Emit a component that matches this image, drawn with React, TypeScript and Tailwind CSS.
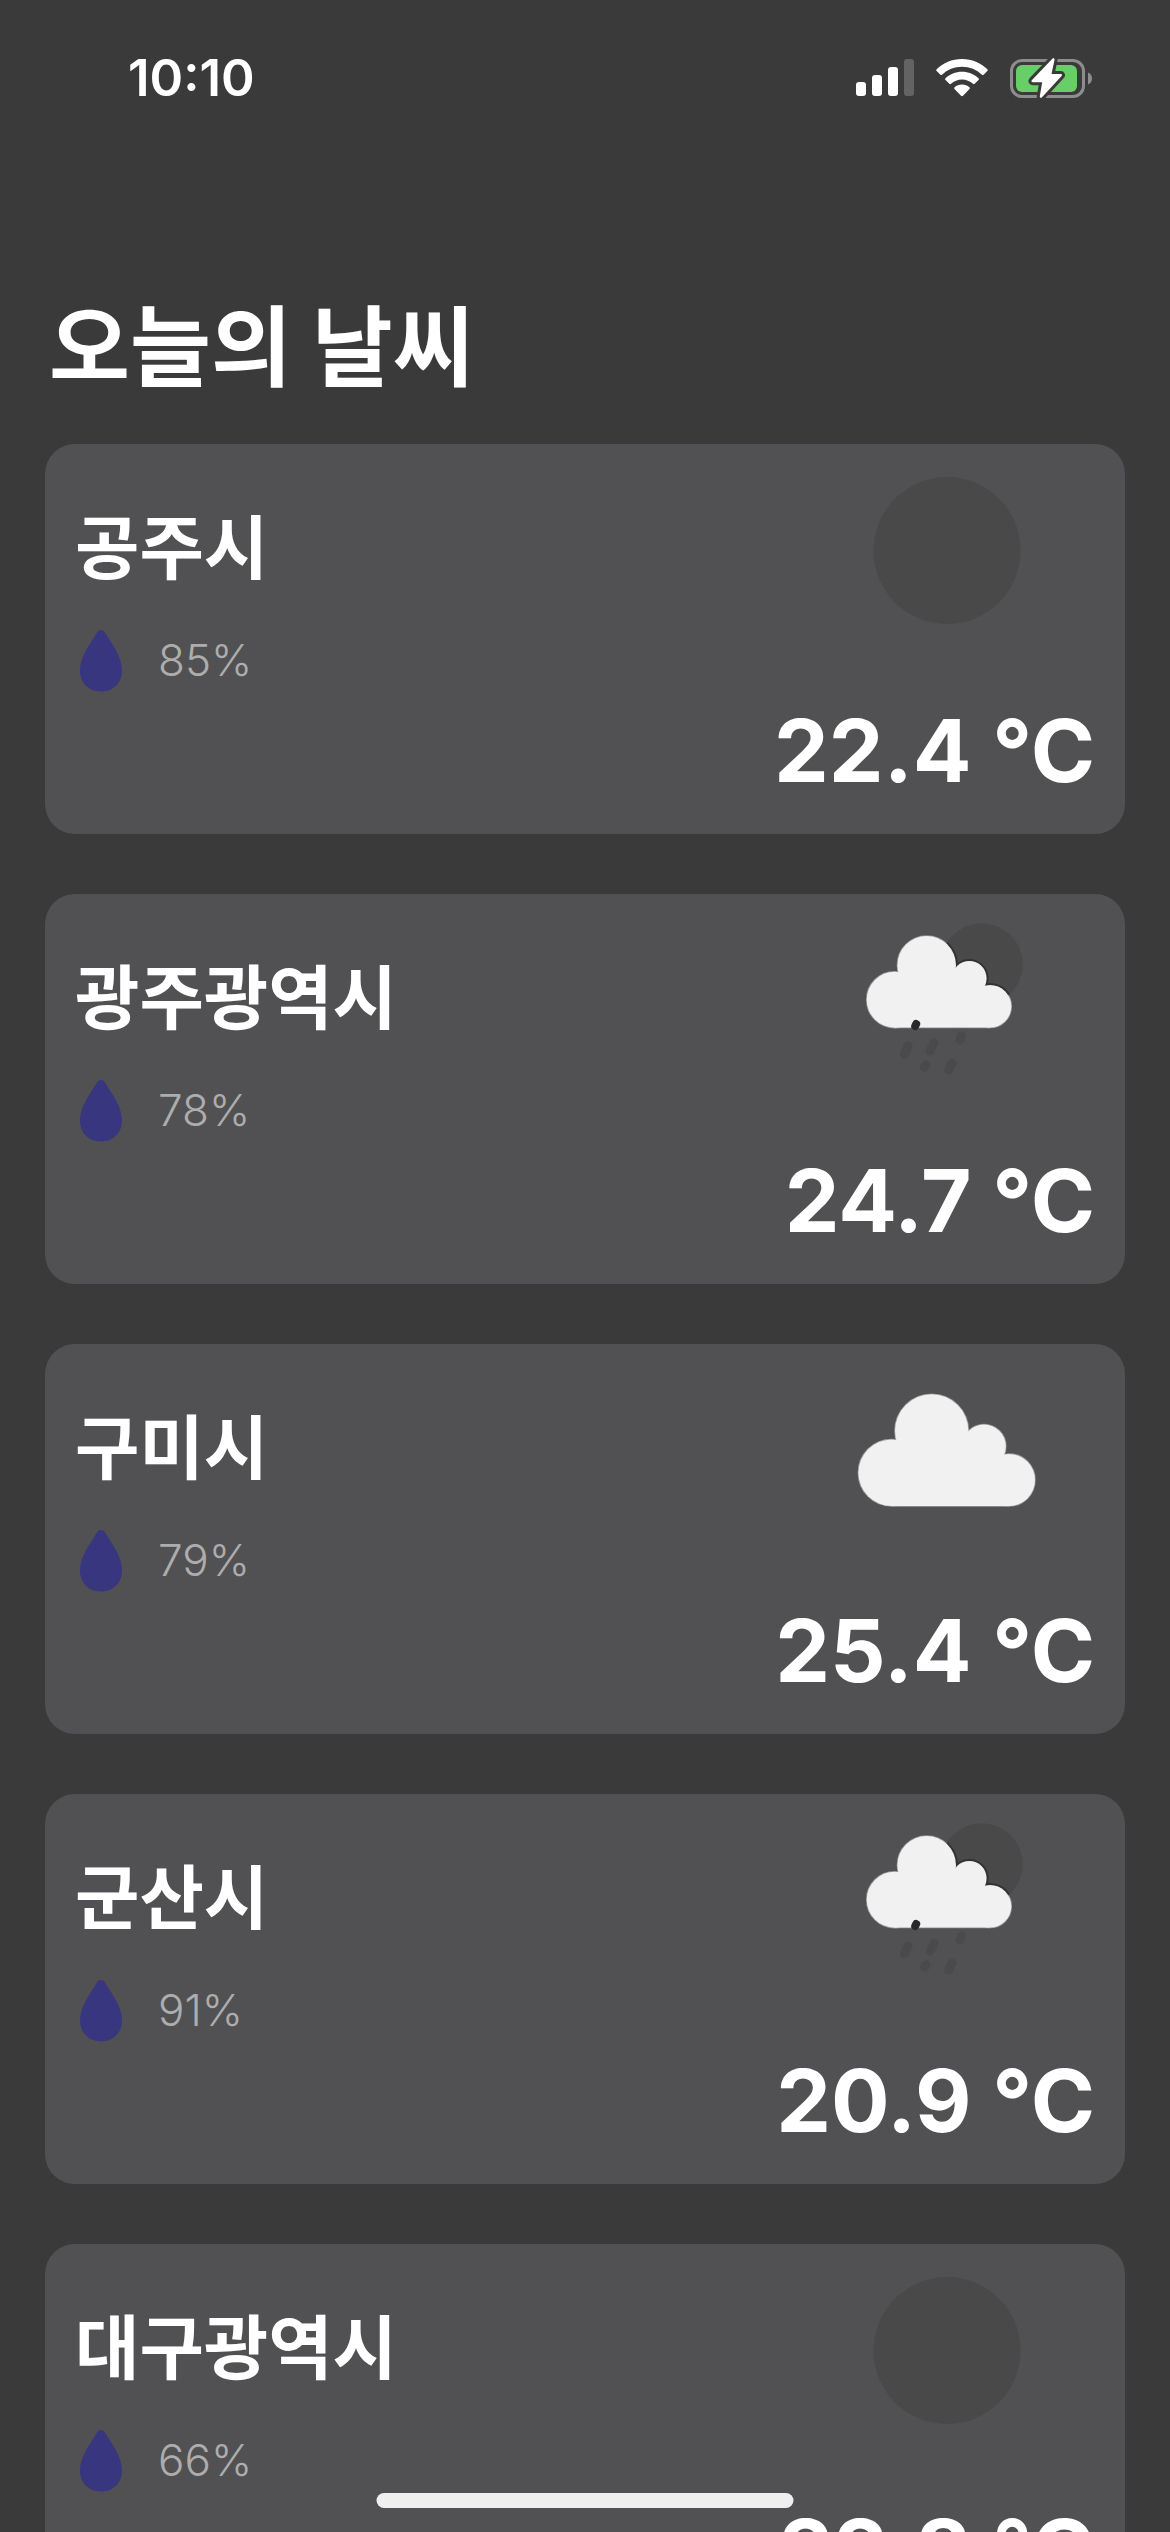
type Sky = "clear" | "clouds" | "rain";

type City = {
  name: string;
  humidity: number;
  temperature: string;
  sky: Sky;
};

const cities: City[] = [
  { name: "공주시", humidity: 85, temperature: "22.4", sky: "clear" },
  { name: "광주광역시", humidity: 78, temperature: "24.7", sky: "rain" },
  { name: "구미시", humidity: 79, temperature: "25.4", sky: "clouds" },
  { name: "군산시", humidity: 91, temperature: "20.9", sky: "rain" },
  { name: "대구광역시", humidity: 66, temperature: "22.8", sky: "clear" },
];

function SignalIcon() {
  return (
    <svg width="58" height="38" viewBox="0 0 58 38" aria-hidden="true">
      <rect x="0" y="23" width="10" height="14" rx="3" fill="#fff" />
      <rect x="16" y="16" width="10" height="21" rx="3" fill="#fff" />
      <rect x="32" y="8" width="10" height="29" rx="3" fill="#fff" />
      <rect x="48" y="0" width="10" height="37" rx="3" fill="#636363" />
    </svg>
  );
}

function WifiIcon() {
  return (
    <svg width="52" height="38" viewBox="0 0 52 38" fill="#fff" aria-hidden="true">
      <path d="M26 0C16 0 7.200 3.900 .7 10.300a1.200 1.200 0 0 0 0 1.700l3.700 3.700c.5.500 1.200.5 1.700 0C11.300 10.800 18.300 7.800 26 7.800s14.700 3 19.900 7.900c.5.500 1.200.5 1.700 0l3.700-3.700a1.200 1.200 0 0 0 0-1.700C44.800 3.900 36 0 26 0Z" />
      <path d="M26 12.800c-6.400 0-12.200 2.500-16.500 6.500a1.200 1.200 0 0 0 0 1.800l3.800 3.700c.5.500 1.200.5 1.700 0 2.900-2.700 6.800-4.300 11-4.300s8.100 1.600 11 4.300c.5.500 1.200.5 1.700 0l3.800-3.700c.5-.5.500-1.300 0-1.800-4.300-4-10.100-6.500-16.500-6.500Z" />
      <path d="M26 25.600c-2.800 0-5.400 1-7.400 2.700-.6.500-.6 1.200-.1 1.700l6.500 6.700c.6.600 1.400.6 2 0l6.500-6.700c.5-.5.500-1.200-.1-1.700-2-1.700-4.600-2.700-7.400-2.700Z" />
    </svg>
  );
}

function BatteryIcon() {
  const bolt =
    "M42.300 .8 21.800 22.200c-.8.900-.3 2 .9 2h9.500L29.800 38.200c-.2 1.400 1.300 2 2.200 1L51.600 18c.8-.9.300-2-.9-2h-9.200l3-14c.3-1.400-1.300-2.200-2.200-1.200Z";
  return (
    <svg width="83" height="41" viewBox="0 0 83 41" aria-hidden="true">
      <rect x="1.500" y="2.500" width="72" height="36" rx="10.500" fill="none" stroke="#8d8d8d" strokeWidth="3" />
      <path d="M78 14.500c2.500 1 4 3.300 4 6s-1.500 5-4 6Z" fill="#8d8d8d" />
      <rect x="6" y="7" width="61" height="27" rx="6" fill="#68ce67" />
      <path d={bolt} fill="#fff" stroke="#3a3a3a" strokeWidth="6" strokeLinejoin="round" />
      <path d={bolt} fill="#fff" />
    </svg>
  );
}

function DropIcon() {
  return (
    <svg width="42" height="62" viewBox="0 0 42 62" aria-hidden="true">
      <path
        d="M21 0c-1.700 0-3 .8-4 2.400C9.800 14 0 26.500 0 40.500 0 53 9 61.500 21 61.500S42 53 42 40.500C42 26.500 32.200 14 25 2.400 24 .8 22.700 0 21 0Z"
        fill="#38367f"
      />
    </svg>
  );
}

function LargeCloud() {
  return (
    <>
      <circle cx="74.700" cy="71" r="36.700" />
      <circle cx="34.700" cy="112.700" r="33.300" />
      <circle cx="127" cy="86.300" r="21.800" />
      <circle cx="152" cy="120" r="26" />
      <path d="M34.700 85H127V96H152V146H34.700Z" />
    </>
  );
}

function SmallCloud() {
  return (
    <>
      <circle cx="69.700" cy="55.300" r="29.300" />
      <circle cx="37.700" cy="89.700" r="28" />
      <circle cx="112.300" cy="68.300" r="17.300" />
      <circle cx="133" cy="96.300" r="21.300" />
      <path d="M38 68H112V77H133V117.600H38Z" />
    </>
  );
}

function SkyIcon({ sky }: { sky: Sky }) {
  return (
    <svg width="180" height="180" viewBox="0 0 180 180" aria-hidden="true">
      {sky === "clear" && <circle cx="90" cy="90.500" r="73.500" fill="#49494a" />}
      {sky === "clouds" && (
        <>
          <g stroke="#9a9a9b" strokeWidth="1.500">
            <LargeCloud />
          </g>
          <g fill="#f1f1f1">
            <LargeCloud />
          </g>
        </>
      )}
      {sky === "rain" && (
        <>
          <defs>
            <clipPath id="sun-disc">
              <circle cx="124.700" cy="54.300" r="41" />
            </clipPath>
          </defs>
          <circle cx="124.700" cy="54.300" r="41" fill="#49494a" />
          <g stroke="#98989a" strokeWidth="1.500">
            <SmallCloud />
          </g>
          <g stroke="#323233" strokeWidth="4" clipPath="url(#sun-disc)">
            <SmallCloud />
          </g>
          <g fill="#f1f1f1">
            <SmallCloud />
          </g>
          <path d="M59.200 114 58.200 116" stroke="#29292a" strokeWidth="8" strokeLinecap="round" />
          <g stroke="#4a4a4b" strokeWidth="9" strokeLinecap="round">
            <path d="M51 136 47.500 144" />
            <path d="M77 133 73 141" />
            <path d="M104.500 126 103 130" />
            <path d="M69 155 67.500 157" />
            <path d="M95 153 91.500 160" />
          </g>
        </>
      )}
    </svg>
  );
}

function CityCard({ city }: { city: City }) {
  return (
    <li className="flex h-[390px] shrink-0 justify-between rounded-[30px] bg-[#515153] px-[30px] py-4">
      <div className="flex flex-col pt-8">
        <h2 className="text-[70px] leading-[104px] font-bold">{city.name}</h2>
        <div className="flex items-center gap-9 pt-[34px] pl-[5px]">
          <DropIcon />
          <span className="pb-0.5 font-[Inter] text-[44px] leading-[60px] font-light text-[#adadad]">
            {city.humidity}%
          </span>
        </div>
      </div>
      <div className="flex flex-col items-end justify-between">
        <div className="mr-[58px]">
          <SkyIcon sky={city.sky} />
        </div>
        <p className="font-[Inter] text-[87px] leading-[134px] font-bold whitespace-nowrap">
          {city.temperature} °C
        </p>
      </div>
    </li>
  );
}

export default function App() {
  return (
    <div className="relative flex h-screen flex-col overflow-hidden bg-[#3a3a3a] font-['Noto_Sans_CJK_KR',sans-serif] text-white">
      <header className="flex h-[156px] shrink-0 items-center justify-between pr-[77px] pl-32">
        <time className="font-[Inter] text-[51px] leading-[60px] font-semibold">10:10</time>
        <div className="flex items-center gap-[22px]">
          <SignalIcon />
          <WifiIcon />
          <BatteryIcon />
        </div>
      </header>
      <main className="flex flex-col px-[45px] pt-[120px]">
        <h1 className="pl-1 text-[88px] leading-[130px] font-bold">오늘의 날씨</h1>
        <ul className="flex flex-col gap-[60px] pt-[38px]">
          {cities.map((city) => (
            <CityCard key={city.name} city={city} />
          ))}
        </ul>
      </main>
      <div className="absolute bottom-6 left-1/2 h-[15px] w-[417px] -translate-x-1/2 rounded-full bg-[#efefef]" />
    </div>
  );
}
